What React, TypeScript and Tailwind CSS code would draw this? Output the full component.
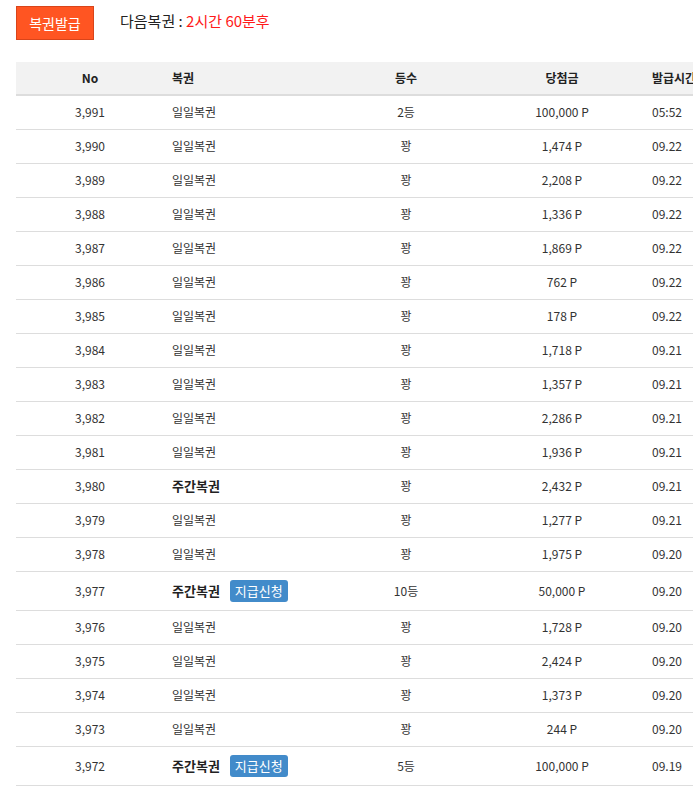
import React from "react";

type Row = [string, string, string, string, string, boolean];
const rows: Row[] = [
  ["3,991", "일일복권", "2등", "100,000 P", "05:52", false],
  ["3,990", "일일복권", "꽝", "1,474 P", "09.22", false],
  ["3,989", "일일복권", "꽝", "2,208 P", "09.22", false],
  ["3,988", "일일복권", "꽝", "1,336 P", "09.22", false],
  ["3,987", "일일복권", "꽝", "1,869 P", "09.22", false],
  ["3,986", "일일복권", "꽝", "762 P", "09.22", false],
  ["3,985", "일일복권", "꽝", "178 P", "09.22", false],
  ["3,984", "일일복권", "꽝", "1,718 P", "09.21", false],
  ["3,983", "일일복권", "꽝", "1,357 P", "09.21", false],
  ["3,982", "일일복권", "꽝", "2,286 P", "09.21", false],
  ["3,981", "일일복권", "꽝", "1,936 P", "09.21", false],
  ["3,980", "주간복권", "꽝", "2,432 P", "09.21", false],
  ["3,979", "일일복권", "꽝", "1,277 P", "09.21", false],
  ["3,978", "일일복권", "꽝", "1,975 P", "09.20", false],
  ["3,977", "주간복권", "10등", "50,000 P", "09.20", true],
  ["3,976", "일일복권", "꽝", "1,728 P", "09.20", false],
  ["3,975", "일일복권", "꽝", "2,424 P", "09.20", false],
  ["3,974", "일일복권", "꽝", "1,373 P", "09.20", false],
  ["3,973", "일일복권", "꽝", "244 P", "09.20", false],
  ["3,972", "주간복권", "5등", "100,000 P", "09.19", true],
];

export default function App() {
  return (
    <div className="w-[693px] h-[798px] overflow-hidden bg-white text-[#333] text-[12px]" style={{ fontFamily: '"Noto Sans CJK KR", "Liberation Sans", sans-serif' }}>
      <div className="flex items-center pl-4 pt-[5px] h-[36px] box-content">
        <button className="w-[78px] h-[34px] bg-[#ff5522] border border-[#d9441a] text-white text-[14px]">복권발급</button>
        <span className="ml-[26px] -mt-[4px] text-[15px] text-[#222]">다음복권 : <span className="text-[#ff1a1a]">2시간 60분후</span></span>
      </div>
      <table className="ml-4 mt-[21px] w-[760px] border-collapse table-fixed">
        <colgroup>
          <col className="w-[148px]" />
          <col className="w-[166px]" />
          <col className="w-[152px]" />
          <col className="w-[160px]" />
          <col className="w-[134px]" />
        </colgroup>
        <thead>
          <tr className="bg-[#f2f2f2] h-[33px] border-b-2 border-[#dddddd] font-bold text-[#222]">
            <th className="text-center">No</th>
            <th className="text-left pl-2">복권</th>
            <th className="text-center">등수</th>
            <th className="text-center">당첨금</th>
            <th className="text-left pl-[10px]">발급시간</th>
          </tr>
        </thead>
        <tbody>
          {rows.map((r) => (
            <tr key={r[0]} className={`${r[5] ? "h-[39px]" : "h-[34px]"} border-b border-[#dddddd]`}>
              <td className="text-center">{r[0]}</td>
              <td className="text-left pl-2">
                <span className={r[1] === "주간복권" ? "font-bold text-[13px] text-[#222]" : ""}>{r[1]}</span>
                {r[5] && (
                  <span className="ml-[10px] inline-block bg-[#428bca] text-white rounded-[3px] px-[5px] py-[2px] text-[13px] leading-[18px]">지급신청</span>
                )}
              </td>
              <td className="text-center">{r[2]}</td>
              <td className="text-center">{r[3]}</td>
              <td className="text-left pl-[10px]">{r[4]}</td>
            </tr>
          ))}
        </tbody>
      </table>
    </div>
  );
}
